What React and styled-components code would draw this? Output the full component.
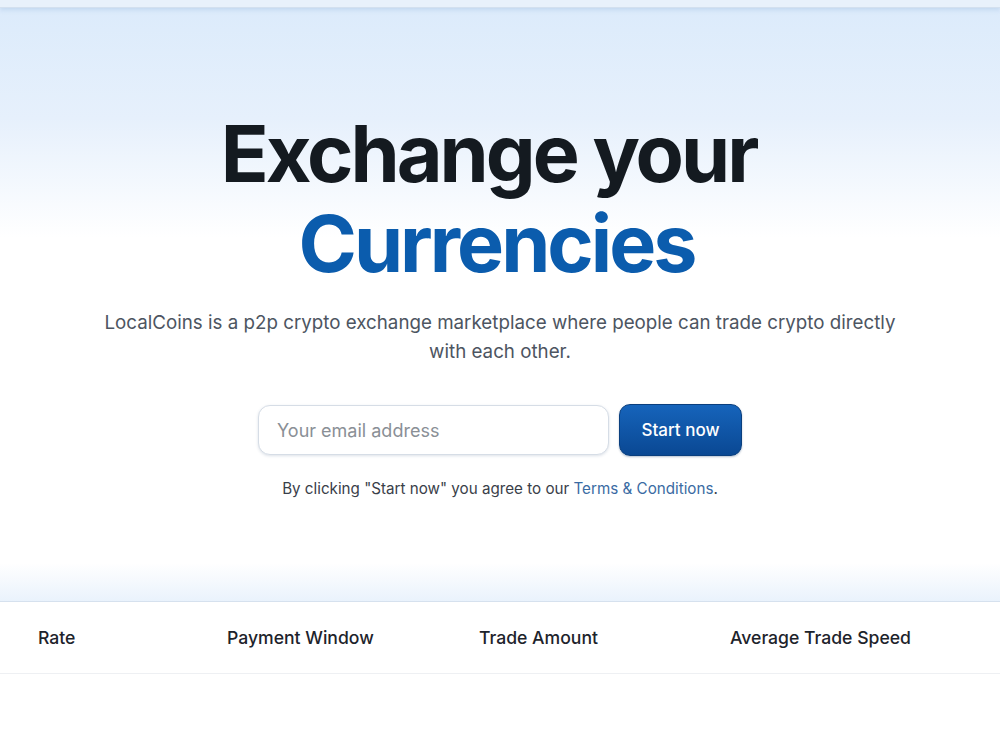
import React from "react"
import styled, { createGlobalStyle } from "styled-components"

const GlobalStyle = createGlobalStyle`
  body {
    margin: 0;
    background: #ffffff;
    font-family: Inter, "Noto Sans", sans-serif;
    -webkit-font-smoothing: antialiased;
  }
`

const Page = styled.div`
  width: 1000px;
  min-height: 750px;
  background: #ffffff;
`

const TopStrip = styled.div`
  height: 7px;
  background: #e8f1fb;
  border-bottom: 1px solid #d3e0ef;
  box-shadow: 0 2px 4px rgba(120, 160, 210, 0.25);
  position: relative;
  z-index: 1;
`

const Hero = styled.section`
  height: 594px;
  display: flex;
  flex-direction: column;
  align-items: center;
  box-sizing: border-box;
  padding-top: 100px;
  background:
    linear-gradient(to bottom, rgba(255, 255, 255, 0) 555px, #e9f2fc 594px),
    linear-gradient(to bottom, #dcebfb 0px, #e6f0fc 110px, #ffffff 230px);
  border-bottom: 1px solid #d6e1ee;
`

const Title = styled.h1`
  margin: 0;
  padding-right: 7px;
  font-size: 79px;
  line-height: 90px;
  font-weight: 700;
  letter-spacing: -3px;
  color: #141a20;
  text-align: center;
`

const Accent = styled.span`
  display: block;
  color: #0b5cad;
`

const Lead = styled.p`
  margin: 20px 0 0;
  max-width: 820px;
  font-size: 18.75px;
  line-height: 29px;
  color: #4d5561;
  text-align: center;
`

const SignupForm = styled.form`
  display: flex;
  align-items: center;
  gap: 10px;
  margin-top: 38px;
`

const EmailInput = styled.input`
  width: 351px;
  height: 50px;
  box-sizing: border-box;
  padding: 0 18px;
  border: 1px solid #d6dde6;
  border-radius: 12px;
  background: #ffffff;
  box-shadow: 0 1px 3px rgba(60, 90, 130, 0.18);
  font-family: Inter, sans-serif;
  font-size: 18px;
  color: #1f2937;
  outline: none;

  &::placeholder {
    color: #8a8f96;
  }
`

const StartButton = styled.button`
  width: 123px;
  height: 52px;
  border: 1px solid #0a3f7e;
  border-radius: 11px;
  background: linear-gradient(to bottom, #1664bb, #0a4893);
  color: #ffffff;
  font-family: Inter, sans-serif;
  font-size: 17px;
  font-weight: 500;
  cursor: pointer;
  box-shadow: 0 1px 2px rgba(10, 50, 100, 0.3);
`

const Terms = styled.p`
  margin: 23px 0 0;
  font-size: 15.2px;
  color: #3a4049;
`

const TermsLink = styled.a`
  color: #3a6ba3;
  text-decoration: none;
`

const TableHead = styled.div`
  display: grid;
  grid-template-columns: 189px 252px 251px 1fr;
  align-items: center;
  height: 71px;
  padding-left: 38px;
  border-bottom: 1px solid #eef0f3;
`

const HeadCell = styled.div`
  font-size: 17.6px;
  font-weight: 500;
  color: #1d232b;
`

const columns = ["Rate", "Payment Window", "Trade Amount", "Average Trade Speed"]

const App = () => {
  return (
    <Page>
      <GlobalStyle />
      <TopStrip />
      <Hero>
        <Title>
          Exchange your{"\u00a0"}
          <Accent>Currencies</Accent>
        </Title>
        <Lead>
          LocalCoins is a p2p crypto exchange marketplace where people can trade
          crypto directly with each other.
        </Lead>
        <SignupForm onSubmit={e => e.preventDefault()}>
          <EmailInput type="email" placeholder="Your email address" />
          <StartButton type="submit">Start now</StartButton>
        </SignupForm>
        <Terms>
          By clicking "Start now" you agree to our{" "}
          <TermsLink href="#">Terms &amp; Conditions</TermsLink>.
        </Terms>
      </Hero>
      <TableHead>
        {columns.map(c => (
          <HeadCell key={c}>{c}</HeadCell>
        ))}
      </TableHead>
    </Page>
  )
}

export default App
